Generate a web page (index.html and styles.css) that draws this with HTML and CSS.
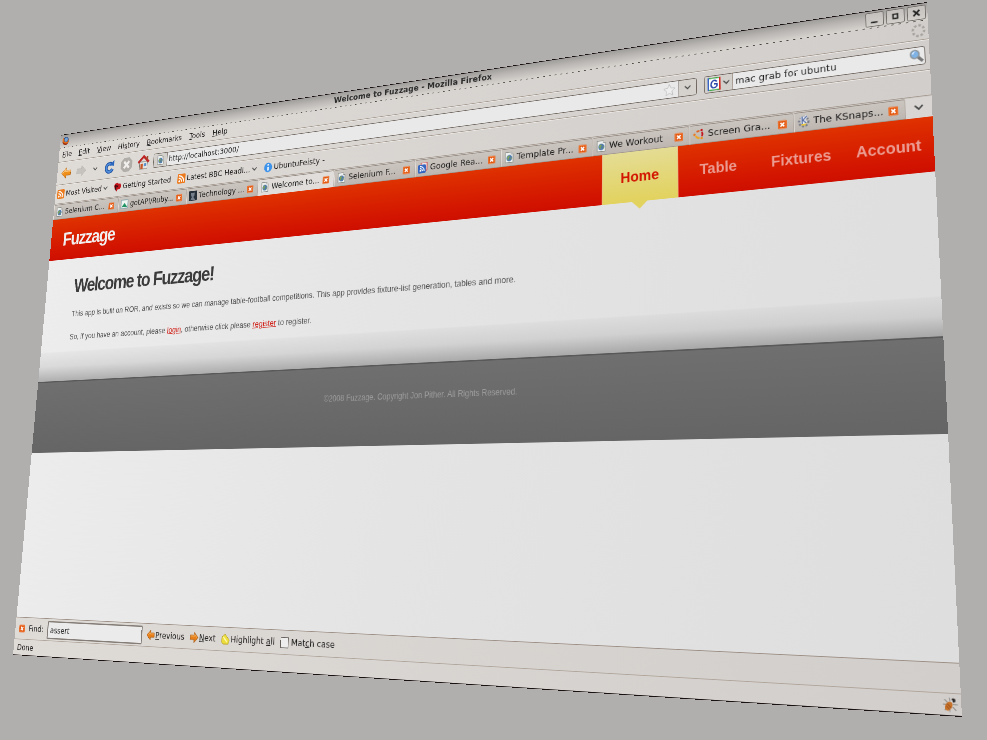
FILE: index.html
```html
<!DOCTYPE html>
<html lang="en">
<head>
<meta charset="utf-8">
<title>Welcome to Fuzzage - Mozilla Firefox</title>
<link rel="stylesheet" href="styles.css">
</head>
<body>
<svg class="defs" aria-hidden="true">
  <symbol id="close" viewBox="0 0 12 12"><rect width="12" height="12" rx="2" fill="#e2560f"/><rect x="1" y="1" width="10" height="10" rx="1" fill="none" stroke="#f28a4e"/><path d="M3.500 3.500l5 5M8.500 3.500l-5 5" stroke="#fff" stroke-width="2"/></symbol>
  <symbol id="page" viewBox="0 0 16 16"><path d="M2 .5h9l3 3v12H2z" fill="#eef0ee" stroke="#8a8d88"/><path d="M11 .5v3h3" fill="#fff" stroke="#8a8d88"/><circle cx="8" cy="9" r="4.500" fill="#4f79ad"/><path d="M5 7q3-3 4 0l-2 2 1 3q-4-1-3-5zM10 8l2 1-1 3z" fill="#7fa653"/></symbol>
  <symbol id="rss" viewBox="0 0 16 16"><rect width="16" height="16" rx="2" fill="#ec7a1c"/><circle cx="4" cy="12" r="1.800" fill="#fff"/><path d="M2.500 7a6.500 6.500 0 0 1 6.500 6.500M2.500 3A10.500 10.500 0 0 1 13 13.500" fill="none" stroke="#fff" stroke-width="2"/></symbol>
  <symbol id="chev" viewBox="0 0 10 8"><path d="M1 1.500l4 4 4-4" fill="none" stroke="#4a4a4a" stroke-width="1.700"/></symbol>
  <symbol id="arrow" viewBox="0 0 16 16"><path d="M1 8l7-7v4h7v6H8v4z" fill="#e8801a" stroke="#a85a10"/><path d="M3 8l4-4v2h7" fill="none" stroke="#f7b566"/></symbol>
</svg>
<main class="scene">
<div class="window" id="window">
  <header class="titlebar">
    <svg class="i16" viewBox="0 0 16 16"><circle cx="8" cy="8" r="7" fill="#2a4a86"/><circle cx="9" cy="6" r="3.500" fill="#6fa7dc"/><path d="M2 2q-3 6 1 11 5 4 10 0 3-4 2-8-2 6-6 5Q4 10 5 5z" fill="#e2701a"/><path d="M1 8q1 6 7 7 5 0 7-5-4 4-8 2-4-1-6-4z" fill="#9c2f10"/></svg>
    <h1 class="title">Welcome to Fuzzage - Mozilla Firefox</h1>
    <button class="wbtn" aria-label="Minimize"><svg viewBox="0 0 22 18"><path d="M6 13h9" stroke="#222" stroke-width="2"/></svg></button>
    <button class="wbtn" aria-label="Maximize"><svg viewBox="0 0 22 18"><rect x="8" y="6" width="6" height="6" fill="none" stroke="#222" stroke-width="2"/></svg></button>
    <button class="wbtn" aria-label="Close"><svg viewBox="0 0 22 18"><path d="M7 5l8 8M15 5l-8 8" stroke="#222" stroke-width="2.500"/></svg></button>
  </header>
  <nav class="menubar" aria-label="Menu">
    <a href="#"><u>F</u>ile</a><a href="#"><u>E</u>dit</a><a href="#"><u>V</u>iew</a><a href="#">Hi<u>s</u>tory</a><a href="#"><u>B</u>ookmarks</a><a href="#"><u>T</u>ools</a><a href="#"><u>H</u>elp</a>
    <svg class="throbber" viewBox="0 0 18 18"><circle cx="9" cy="9" r="7" fill="none" stroke="#a6a29e" stroke-width="3" stroke-dasharray="3 2.500"/></svg>
  </nav>
  <div class="toolbar">
    <button class="tool" aria-label="Back"><svg viewBox="0 0 24 24"><path d="M2 12L12 3v5h10v8H12v5z" fill="#f0901c" stroke="#b8650e"/><path d="M4 12l7-6v3h10v2" fill="none" stroke="#fcc77c" stroke-width="2"/></svg></button>
    <button class="tool" aria-label="Forward"><svg viewBox="0 0 24 24"><path d="M22 12L12 3v5H2v8h10v5z" fill="#c6c2be" stroke="#b7b3ae"/></svg></button>
    <button class="tool slim" aria-label="History list"><svg class="chev" viewBox="0 0 10 8"><use href="#chev"/></svg></button>
    <button class="tool" aria-label="Reload"><svg viewBox="0 0 24 24"><path d="M16 8A7 7 0 1 0 18 16" fill="none" stroke="#1d4f9e" stroke-width="6"/><path d="M16 8A7 7 0 1 0 18 16" fill="none" stroke="#4f8fdd" stroke-width="3"/><path d="M11 9L21 11V1z" fill="#2c68bd"/></svg></button>
    <button class="tool wide" aria-label="Stop"><svg viewBox="0 0 24 24"><path d="M7 1h10l6 6v10l-6 6H7l-6-6V7z" fill="#b1ada9"/><path d="M7 7l10 10M17 7L7 17" stroke="#f1efed" stroke-width="4"/></svg></button>
    <button class="tool" aria-label="Home"><svg viewBox="0 0 24 24"><path d="M4 11h16v12H4z" fill="#e9e6e2" stroke="#77706a"/><path d="M1 12L12 2l11 10" fill="none" stroke="#bd2525" stroke-width="4"/><path d="M18 2h3v6h-3z" fill="#9d4c2c"/><rect x="6" y="14" width="5" height="9" fill="#c5592a"/><rect x="13" y="14" width="5" height="5" fill="#5d91c9"/></svg></button>
    <div class="url">
      <span class="urlicon"><svg class="i16" viewBox="0 0 16 16"><use href="#page"/></svg></span>
      <input type="text" aria-label="Address" value="http://localhost:3000/">
      <svg class="star" viewBox="0 0 20 20"><path d="M10 2l2.400 5.300 5.600.7-4.200 3.800 1.200 5.700-5-2.900-5 2.900 1.200-5.700L2 8l5.600-.7z" fill="#eee" stroke="#bdbdbd"/></svg>
      <button class="drop" aria-label="Address list"><svg class="chev" viewBox="0 0 10 8"><use href="#chev"/></svg></button>
    </div>
    <div class="search">
      <button class="engine" aria-label="Search engine"><svg class="glogo" viewBox="0 0 18 18"><rect width="18" height="18" fill="#fff"/><path d="M0 0h2v18H0z" fill="#3864c4"/><path d="M16 0h2v18h-2z" fill="#cf2b22"/><path d="M2 0h14v1.500H2zM2 16.500h14V18H2z" fill="#3fa446"/><path d="M13 6Q9 2 6 6q-3 5 1 8 4 1 6-2V9H9" fill="none" stroke="#2a48a8" stroke-width="2"/></svg><svg class="chev" viewBox="0 0 10 8"><use href="#chev"/></svg></button>
      <input type="text" aria-label="Search" value="mac grab for ubuntu">
      <svg class="glass" viewBox="0 0 20 20"><path d="M12 12l6 6" stroke="#777" stroke-width="4"/><circle cx="8" cy="8" r="5.500" fill="#7fb2e5" stroke="#8d979f" stroke-width="2"/><path d="M4 7q2-4 6-3-3 0-4 4z" fill="#dceeff"/></svg>
    </div>
  </div>
  <nav class="bookmarks" aria-label="Bookmarks">
    <a href="#"><svg class="i16" viewBox="0 0 16 16"><use href="#rss"/></svg>Most Visited<svg class="chev" viewBox="0 0 10 8"><use href="#chev"/></svg></a>
    <a href="#"><svg class="i16" viewBox="0 0 16 16"><path d="M2 3q5-4 8 0 6-1 5 5 0 5-6 4l-3 4-2-4Q-1 8 2 3z" fill="#c4141c"/><path d="M2 6q2-4 4 0l-1 8-3-3z" fill="#3b0a0c"/><circle cx="8" cy="7" r="1.500" fill="#3b0a0c"/></svg>Getting Started</a>
    <a href="#"><svg class="i16" viewBox="0 0 16 16"><use href="#rss"/></svg>Latest BBC Headl...<svg class="chev" viewBox="0 0 10 8"><use href="#chev"/></svg></a>
    <a href="#"><svg class="i16" viewBox="0 0 16 16"><circle cx="8" cy="8" r="7.500" fill="#3d93ea"/><path d="M8 7v6M8 3v2" stroke="#fff" stroke-width="3"/></svg>UbuntuFeisty -</a>
  </nav>
  <div class="tabs">
    <a class="tab" href="#"><svg class="i16" viewBox="0 0 16 16"><use href="#page"/></svg><span>Selenium C...</span><svg class="x" viewBox="0 0 12 12"><use href="#close"/></svg></a>
    <a class="tab" href="#"><svg class="i16" viewBox="0 0 16 16"><path d="M1 1h14v14H1z" fill="#eef4f0" stroke="#6c94a2"/><path d="M2 13l6-7 6 7z" fill="#1f9565"/></svg><span>gotAPI/Ruby...</span><svg class="x" viewBox="0 0 12 12"><use href="#close"/></svg></a>
    <a class="tab" href="#"><svg class="i16" viewBox="0 0 16 16"><rect width="16" height="16" fill="#26303a"/><path d="M4 3h7v5l-2 2 4 5H3l3-5-2-3z" fill="#75808c"/></svg><span>Technology ...</span><svg class="x" viewBox="0 0 12 12"><use href="#close"/></svg></a>
    <a class="tab active" href="#"><svg class="i16" viewBox="0 0 16 16"><use href="#page"/></svg><span>Welcome to...</span><svg class="x" viewBox="0 0 12 12"><use href="#close"/></svg></a>
    <a class="tab" href="#"><svg class="i16" viewBox="0 0 16 16"><use href="#page"/></svg><span>Selenium F...</span><svg class="x" viewBox="0 0 12 12"><use href="#close"/></svg></a>
    <a class="tab" href="#"><svg class="i16" viewBox="0 0 16 16"><path d="M5 0h10v12H5z" fill="#f3e3e3" stroke="#c33"/><rect y="3" width="13" height="13" rx="2" fill="#3465c0"/><circle cx="4" cy="12" r="1.500" fill="#fff"/><path d="M3 8.500a4.500 4.500 0 0 1 4.500 4.500M3 5.500A7.500 7.500 0 0 1 10.500 13" fill="none" stroke="#fff" stroke-width="1.500"/></svg><span>Google Rea...</span><svg class="x" viewBox="0 0 12 12"><use href="#close"/></svg></a>
    <a class="tab" href="#"><svg class="i16" viewBox="0 0 16 16"><use href="#page"/></svg><span>Template Pr...</span><svg class="x" viewBox="0 0 12 12"><use href="#close"/></svg></a>
    <a class="tab" href="#"><svg class="i16" viewBox="0 0 16 16"><use href="#page"/></svg><span>We Workout</span><svg class="x" viewBox="0 0 12 12"><use href="#close"/></svg></a>
    <a class="tab" href="#"><svg class="i16" viewBox="0 0 16 16"><g fill="none" stroke-width="2.500"><path d="M5 4.500A5 5 0 0 1 9 3.500" stroke="#e0601c"/><path d="M12 5a5 5 0 0 1 0 6" stroke="#c4161c"/><path d="M9 13a5 5 0 0 1-5-3" stroke="#f2a31c"/></g><circle cx="2" cy="8" r="1.700" fill="#e8771c"/><circle cx="12" cy="2.500" r="1.700" fill="#c4161c"/><circle cx="12" cy="13.500" r="1.700" fill="#ef8c1c"/></svg><span>Screen Gra...</span><svg class="x" viewBox="0 0 12 12"><use href="#close"/></svg></a>
    <a class="tab" href="#"><svg class="i16" viewBox="0 0 16 16"><circle cx="8" cy="8" r="6" fill="none" stroke="#777c88" stroke-width="3" stroke-dasharray="2.500 2"/><circle cx="8" cy="10" r="3.500" fill="#e8c33c"/><path d="M6 1v10M12 1L7 6l4 4" fill="none" stroke="#e6ecf8" stroke-width="4"/><path d="M6 1v10M12 1L7 6l4 4" fill="none" stroke="#53699b" stroke-width="1.500"/></svg><span>The KSnaps...</span><svg class="x" viewBox="0 0 12 12"><use href="#close"/></svg></a>
    <button class="alltabs" aria-label="List all tabs"><svg viewBox="0 0 10 8"><use href="#chev"/></svg></button>
  </div>
  <div class="site">
    <div class="masthead">
      <a class="logo" href="#">Fuzzage</a>
      <nav class="sitenav" aria-label="Site"><a class="current" href="#">Home</a><a href="#">Table</a><a href="#">Fixtures</a><a href="#">Account</a></nav>
    </div>
    <section class="content">
      <h2>Welcome to Fuzzage!</h2>
      <p>This app is built on ROR, and exists so we can manage table-football competitions. This app provides fixture-list generation, tables and more.</p>
      <p>So, if you have an account, please <a href="#">login</a>, otherwise click please <a href="#">register</a> to register.</p>
    </section>
    <footer class="copyright">©2008 Fuzzage. Copyright Jon Pither. All Rights Reserved.</footer>
  </div>
  <form class="findbar">
    <svg class="x" viewBox="0 0 12 12"><use href="#close"/></svg>
    <label for="find">Find:</label>
    <input id="find" class="find" type="text" value="assert">
    <button type="button"><svg class="i16" viewBox="0 0 16 16"><use href="#arrow"/></svg><span><u>P</u>revious</span></button>
    <button type="button"><svg class="i16 flip" viewBox="0 0 16 16"><use href="#arrow"/></svg><span><u>N</u>ext</span></button>
    <button type="button"><svg class="i16" viewBox="0 0 16 16"><path d="M2 5l5-4 8 8-2 6H4l-3-3z" fill="#ecdc3c" stroke="#b5a12a"/><path d="M4 5l7 7" stroke="#fff9b0" stroke-width="2"/></svg><span>Highlight <u>a</u>ll</span></button>
    <input id="case" class="case" type="checkbox"><label for="case">Mat<u>c</u>h case</label>
  </form>
  <div class="status"><span>Done</span>
    <svg class="bug" viewBox="0 0 20 20"><path d="M3 4l4 4M1 10h6M3 17l4-4M9 2l1 4M17 17l-4-4M19 10h-6M9 19v-3" stroke="#8f8b86" stroke-width="1.200"/><ellipse cx="8" cy="12" rx="4" ry="6" transform="rotate(35 8 12)" fill="#c9722a"/><path d="M6 9l5 5M5 12l4 4" stroke="#7c3d10"/><circle cx="14" cy="5" r="2.500" fill="#2e2b2b"/><circle cx="12" cy="6" r="1.200" fill="#ddd"/></svg>
  </div>
</div>
</main>
<script src="scene.js"></script>
</body>
</html>
```
FILE: styles.css
```css
* { box-sizing: border-box; }
body { margin: 0; background: #b0afad; font: 13px/16px "DejaVu Sans", sans-serif; color: #1c1c1c; }
a { color: inherit; text-decoration: none; }
button, input { font: inherit; color: inherit; margin: 0; }
button { padding: 0; border: 0; background: none; }
svg { display: block; flex: none; }
.defs { display: none; }
.scene { height: 100vh; overflow: hidden; }

/* The desktop window is laid out flat, then tilted by scene.js. */
.window { width: 1440px; min-height: 850px; display: flex; flex-direction: column; position: relative; transform-origin: 0 0; background: linear-gradient(90deg, #dfdbd7, #d2cecb); border-top: 1px solid #1a1212; border-bottom: 1px solid #1a1212; }
.i16 { width: 16px; height: 16px; }
.chev { width: 10px; height: 8px; }

.titlebar { height: 22px; flex: none; display: flex; align-items: center; gap: 3px; padding: 0 2px 0 4px; background: linear-gradient(#9f9d9b, #bab7b4 45%, #d6d2ce); position: relative; }
.titlebar::after { content: ""; position: absolute; left: 0; right: 0; bottom: -1px; height: 1px; background: repeating-linear-gradient(90deg, #4a4642 0 3px, #d6d2ce 3px 9px); }
.title { flex: 1; margin: 0; font-size: 13px; line-height: 16px; font-weight: bold; text-align: center; color: #2c2c2c; }
.wbtn { width: 23px; height: 19px; border: 1px solid #706c68; border-radius: 2px; background: linear-gradient(#c3c0bd, #d2cfcb); }
.wbtn svg { width: 100%; height: 100%; }

.menubar { height: 26px; flex: none; display: flex; align-items: center; gap: 1px; padding: 0 3px 0 0; border-bottom: 1px solid #a59a90; box-shadow: 0 1px #eceae7; }
.menubar a { padding: 0 7px; }
.throbber { width: 18px; height: 18px; margin-left: auto; }

.toolbar { height: 40px; flex: none; display: flex; align-items: center; padding: 0 5px 0 2px; border-bottom: 1px solid #a59a90; box-shadow: 0 1px #eceae7; }
.tool { width: 34px; height: 28px; display: grid; place-items: center; }
.tool svg { width: 25px; height: 24px; }
.tool.slim { width: 28px; }
.tool .chev { width: 10px; height: 8px; }
.tool.wide { width: 38px; }
.tool.wide svg { width: 27px; height: 26px; }
.url, .search { height: 24px; display: flex; align-items: stretch; border: 1px solid #6e655e; border-radius: 3px; background: #e9e9e9; overflow: hidden; }
.url { flex: 1; margin: 0 10px 0 4px; align-items: center; }
.url input, .search input { flex: 1; min-width: 0; border: 0; padding: 0 3px; background: none; }
.urlicon { width: 28px; height: 100%; display: grid; place-items: center; background: #d3cfcb; border-right: 1px solid #8a827b; }
.star { width: 22px; height: 20px; margin-right: 2px; }
.drop { width: 25px; height: 100%; display: grid; place-items: center; background: #d5d1cd; border-left: 1px solid #8a827b; }
.search { width: 288px; align-items: center; }
.engine { width: 39px; height: 100%; display: flex; align-items: center; justify-content: center; gap: 3px; background: #d3cfcb; border-right: 1px solid #a59a90; }
.glogo { width: 18px; height: 18px; }
.glass { width: 20px; height: 19px; }

.bookmarks { height: 32px; flex: none; display: flex; align-items: center; gap: 13px; padding: 0 4px; }
.bookmarks a { display: flex; align-items: center; gap: 3px; }

.tabs { height: 28px; flex: none; display: flex; padding-top: 1px; border-top: 1px solid #a59a90; background: linear-gradient(90deg, #d8d4d0, #cdc8c4); }
.tab { flex: 1; display: flex; align-items: center; gap: 4px; padding: 0 8px 0 4px; border: 1px solid #958b83; border-right-color: #b3aaa2; border-left-color: #e3ded9; border-bottom: 1px solid #a1978f; border-radius: 3px 3px 0 0; background: linear-gradient(#cbc5c0, #bdb6b0); }
.tab span { flex: 1; white-space: nowrap; }
.tab.active { background: #e0ddda; border-bottom-color: #e0ddda; }
.x { width: 12px; height: 13px; }
.alltabs { width: 32px; display: grid; place-items: center; background: #d8d5d2; }
.alltabs svg { width: 12px; height: 10px; }

.site { flex: 1; display: flex; flex-direction: column; background: linear-gradient(100deg, #ededed, #e4e4e4 50%, #dedede); font-family: "Liberation Sans", Arial, sans-serif; font-size: 13px; }
.masthead { height: 70px; flex: none; display: flex; align-items: center; padding-left: 26px; background: linear-gradient(#df3200, #d21400 80%, #ce0f00); }
.logo { font-size: 32px; line-height: 40px; font-weight: bold; letter-spacing: -2px; color: #f1efef; }
.sitenav { margin-left: auto; display: flex; align-self: stretch; font-size: 20px; font-weight: bold; color: #eb9c92; }
.sitenav a { width: 110px; display: grid; place-items: center; position: relative; }
.sitenav .current { color: #d21400; background: linear-gradient(#e4dc94, #e2d25e); border: solid #f0b090; border-width: 0 1px; }
.sitenav .current::after { content: ""; position: absolute; top: 100%; left: 50%; margin-left: -11px; border: 11px solid transparent; border-top: 10px solid #e2d25e; border-bottom: 0; }
.content { height: 202px; flex: none; padding: 26px 60px 0; color: #515151; background: linear-gradient(transparent 76%, rgba(110, 110, 110, .05) 77%, rgba(110, 110, 110, .15) 88%, rgba(90, 90, 90, .42)); }
.content h2 { margin: 0 0 19px; font-size: 32px; line-height: 40px; letter-spacing: -2px; color: #3b3b3b; }
.content p { margin: 0 0 22px; line-height: 16px; }
.content p a { color: #cf1b12; text-decoration: underline; }
.copyright { height: 115px; flex: none; padding-top: 36px; font-size: 12px; text-align: center; color: #9c9c9c; background: linear-gradient(#6f6f6f, #656565); border-top: 2px solid #595959; }

.findbar { height: 33px; flex: none; display: flex; align-items: center; gap: 8px; padding: 0 8px; margin: 0; border-top: 1px solid #9c8f85; }
.find { width: 190px; height: 27px; padding: 0 4px; border: 2px solid #857e78; border-radius: 2px; background: #ebebeb; }
.findbar button { display: flex; align-items: center; gap: 1px; margin-right: 2px; }
.flip { transform: scaleX(-1); }
.case { appearance: none; width: 14px; height: 15px; border: 1px solid #66605b; background: #ededed; }
.case + label { margin-left: -4px; }
.status { height: 24px; flex: none; display: flex; align-items: center; justify-content: space-between; padding: 0 3px 0 7px; border-top: 1px solid #b0a59b; }
.bug { width: 18px; height: 19px; }
```
FILE: scene.js
```js
// Window corners as fractions of the viewport: top-left, top-right, bottom-right, bottom-left.
const corners = [[0.0618, 0.1824], [0.9392, 0.0027], [0.9747, 0.9689], [0.0132, 0.8851]];

function tilt() {
  const el = document.getElementById("window");
  const w = el.offsetWidth, h = el.offsetHeight;
  const [[x0, y0], [x1, y1], [x2, y2], [x3, y3]] =
    corners.map(([x, y]) => [x * innerWidth, y * innerHeight]);
  const dx1 = x1 - x2, dx2 = x3 - x2, dx3 = x0 - x1 + x2 - x3;
  const dy1 = y1 - y2, dy2 = y3 - y2, dy3 = y0 - y1 + y2 - y3;
  const den = dx1 * dy2 - dx2 * dy1;
  const g = (dx3 * dy2 - dx2 * dy3) / den;
  const k = (dx1 * dy3 - dx3 * dy1) / den;
  const m = [
    (x1 - x0 + g * x1) / w, (y1 - y0 + g * y1) / w, 0, g / w,
    (x3 - x0 + k * x3) / h, (y3 - y0 + k * y3) / h, 0, k / h,
    0, 0, 1, 0,
    x0, y0, 0, 1
  ];
  el.style.transform = `matrix3d(${m.join(",")})`;
}

tilt();
addEventListener("resize", tilt);
```
